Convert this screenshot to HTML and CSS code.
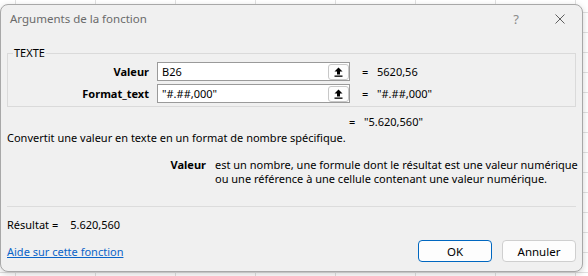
FILE: index.html
```html
<!DOCTYPE html>
<html lang="fr">
<head>
<meta charset="utf-8">
<link rel="stylesheet" href="styles.css">
</head>
<body>
<div class="dialog">
  <div class="titlebar">
    <span class="title">Arguments de la fonction</span>
    <span class="help">?</span>
    <svg class="close" width="10" height="10" viewBox="0 0 10 10"><path d="M0.5 0.5 L9.5 9.5 M9.5 0.5 L0.5 9.5" stroke="#5f5f5f" stroke-width="1" fill="none"/></svg>
  </div>
  <fieldset class="args">
    <legend>TEXTE</legend>
    <div class="row first">
      <label class="lbl">Valeur</label>
      <div class="input"><span class="val">B26</span><span class="pick"><svg width="9" height="10" viewBox="0 0 9 10"><path d="M4.5 0.5 L8.5 4.5 L6 4.5 L6 7.5 L3 7.5 L3 4.5 L0.5 4.5 Z" fill="#000"/><rect x="0.5" y="8.5" width="8" height="1.3" fill="#000"/></svg></span></div>
      <span class="eq">=</span>
      <span class="res">5620,56</span>
    </div>
    <div class="row">
      <label class="lbl">Format_text</label>
      <div class="input"><span class="val">"#.##,000"</span><span class="pick"><svg width="9" height="10" viewBox="0 0 9 10"><path d="M4.5 0.5 L8.5 4.5 L6 4.5 L6 7.5 L3 7.5 L3 4.5 L0.5 4.5 Z" fill="#000"/><rect x="0.5" y="8.5" width="8" height="1.3" fill="#000"/></svg></span></div>
      <span class="eq">=</span>
      <span class="res">"#.##,000"</span>
    </div>
  </fieldset>
  <div class="total"><span class="eq">=</span><span class="res">"5.620,560"</span></div>
  <p class="summary">Convertit une valeur en texte en un format de nombre spécifique.</p>
  <div class="argdesc">
    <span class="argname">Valeur</span>
    <span class="argtext">est un nombre, une formule dont le résultat est une valeur numérique<br>ou une référence à une cellule contenant une valeur numérique.</span>
  </div>
  <hr class="sep">
  <div class="result"><span>Résultat =</span><span class="resval">5.620,560</span></div>
  <div class="footer">
    <a class="helplink" href="#">Aide sur cette fonction</a>
    <div class="buttons">
      <button class="btn ok">OK</button>
      <button class="btn">Annuler</button>
    </div>
  </div>
</div>
</body>
</html>
```
FILE: styles.css
```css
html, body {
  margin: 0;
  padding: 0;
}
body {
  width: 588px;
  height: 276px;
  overflow: hidden;
  background-color: #ffffff;
  background-image:
    linear-gradient(to right, #e1e1e1 1px, transparent 1px),
    linear-gradient(to bottom, #e1e1e1 1px, transparent 1px);
  background-size: 80px 20px;
  background-position: 15px 12px;
  font-family: "Noto Sans", "Open Sans", sans-serif;
  font-size: 11px;
  color: #000;
}
.dialog {
  box-sizing: border-box;
  width: 583px;
  height: 268px;
  margin: 4px 0 0 0;
  background: #f0f0f0;
  border: 1px solid #a8a8a8;
  border-radius: 8px;
  box-shadow: 0 2px 6px rgba(0,0,0,0.18);
  display: flex;
  flex-direction: column;
  padding: 0 6px 0 6px;
}
.titlebar {
  height: 27px;
  display: flex;
  align-items: center;
}
.title {
  font-size: 11.5px;
  color: #6a6a6a;
  margin-left: 3px;
  flex: 1;
}
.help {
  color: #8a8a8a;
  font-size: 13px;
  margin-right: 36px;
}
.close {
  margin-right: 11px;
}
.args {
  margin: 15px 0 0 0;
  padding: 0 0 4px 0;
  border: 1px solid #dadada;
  height: 60px;
  box-sizing: border-box;
  min-width: 0;
}
.args legend {
  font-size: 11px;
  padding: 0 1px;
  margin-left: 5px;
  line-height: 12px;
}
.row {
  display: flex;
  align-items: center;
  height: 19px;
  margin-top: 3px;
}
.row.first {
  margin-top: 3px;
}
.lbl {
  width: 141px;
  text-align: right;
  font-weight: bold;
  margin-right: 8px;
}
.input {
  box-sizing: border-box;
  width: 193px;
  height: 19px;
  background: #fff;
  border: 1px solid #9a9a9a;
  display: flex;
  align-items: center;
  justify-content: space-between;
  padding-left: 4px;
}
.pick {
  box-sizing: border-box;
  width: 21px;
  height: 16px;
  border: 1px solid #c8c8c8;
  border-radius: 3px;
  background: #fdfdfd;
  display: flex;
  align-items: center;
  justify-content: center;
}
.eq {
  margin-left: 12px;
  width: 15px;
}
.total {
  display: flex;
  align-items: center;
  height: 14px;
  margin-top: 7px;
  padding-left: 342px;
}
.total .eq {
  margin-left: 0;
}
.summary {
  margin: 2px 0 0 0;
  line-height: 16px;
}
.argdesc {
  display: flex;
  margin-top: 12px;
  line-height: 14px;
}
.argname {
  width: 199px;
  flex: none;
  text-align: right;
  font-weight: bold;
  margin-right: 9px;
}
.argtext {
  white-space: nowrap;
}
.sep {
  margin: 20px 0 0 0;
  border: 0;
  border-top: 1px solid #dcdcdc;
  height: 0;
}
.result {
  margin-top: 10px;
  line-height: 16px;
  display: flex;
}
.resval {
  margin-left: 12px;
}
.footer {
  display: flex;
  justify-content: space-between;
  align-items: flex-end;
  margin-top: 7px;
}
.helplink {
  color: #0a64c8;
  text-decoration: underline;
  line-height: 16px;
  margin-bottom: 2px;
}
.buttons {
  display: flex;
  gap: 10px;
}
.btn {
  box-sizing: border-box;
  width: 74px;
  height: 22px;
  background: #fdfdfd;
  border: 1px solid #cfcfcf;
  border-radius: 4px;
  font-family: "Noto Sans", "Open Sans", sans-serif;
  font-size: 11.5px;
  color: #000;
  padding: 0;
}
.btn.ok {
  border-color: #0067c0;
}
```
